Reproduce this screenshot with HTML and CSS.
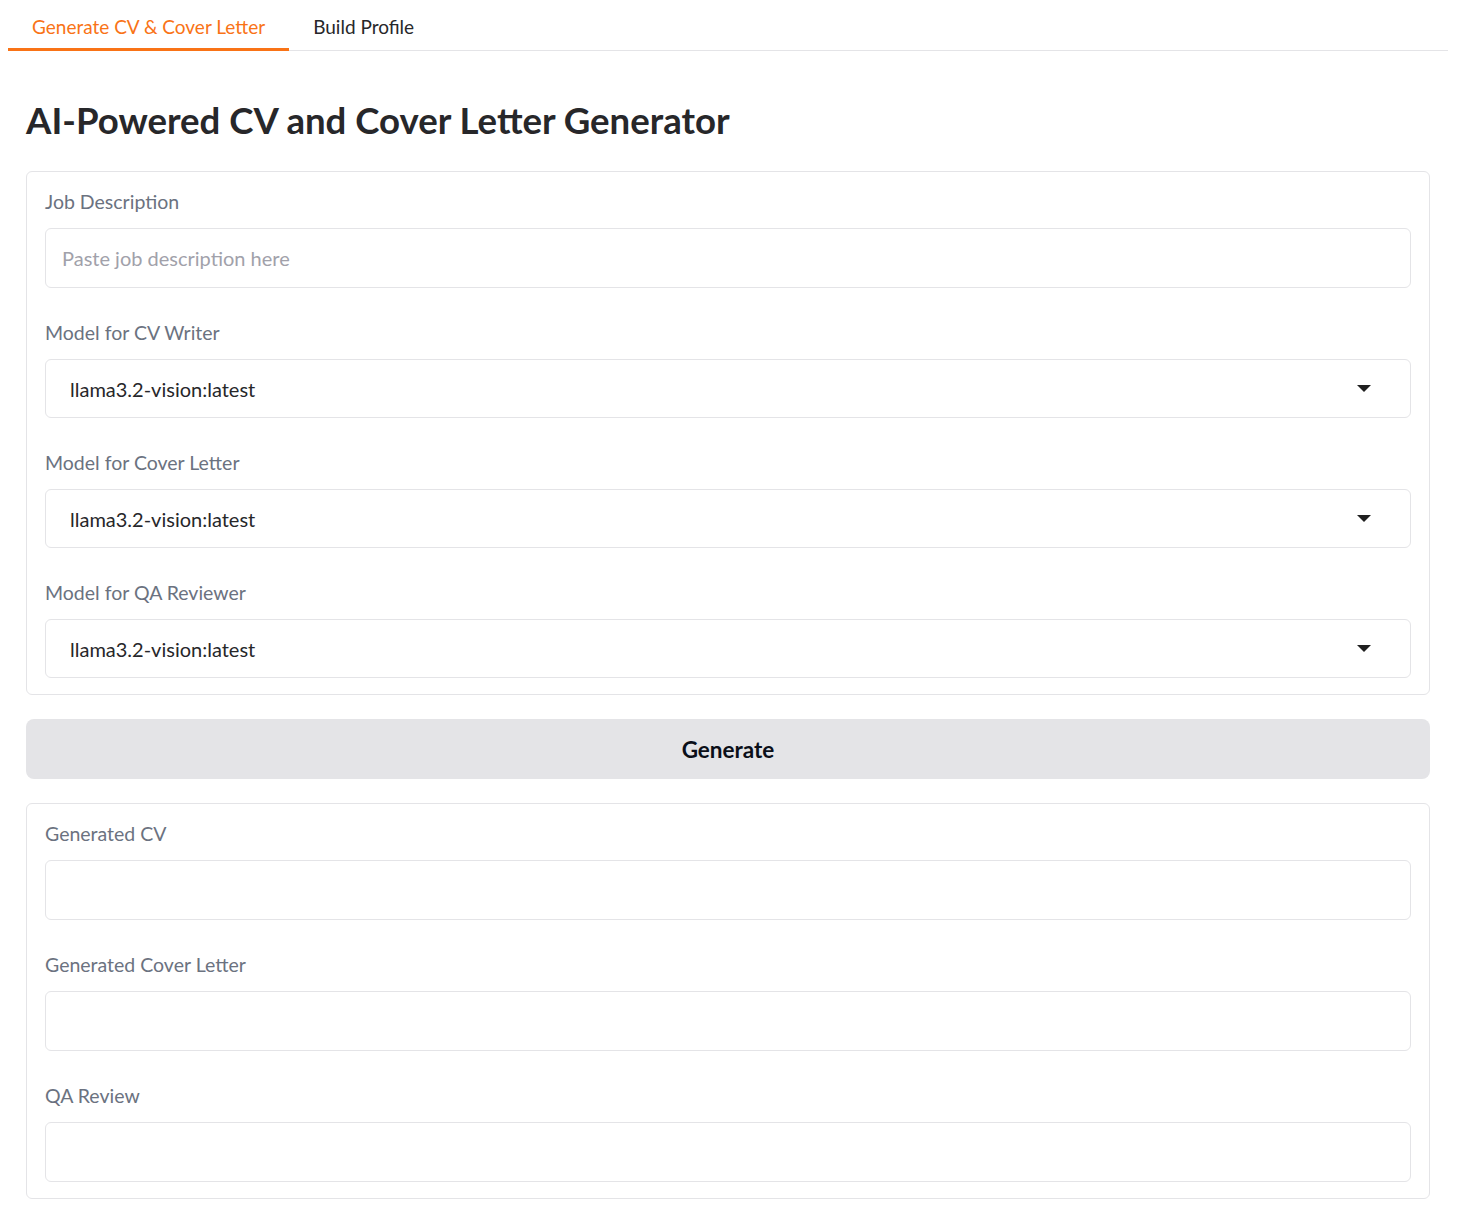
FILE: index.html
```html
<!DOCTYPE html>
<html lang="en">
<head>
<meta charset="utf-8">
<title>AI-Powered CV and Cover Letter Generator</title>
<link rel="stylesheet" href="styles.css">
</head>
<body>
<div class="tabs">
  <button class="tab active">Generate CV &amp; Cover Letter</button>
  <button class="tab">Build Profile</button>
  <div class="tab-rest"></div>
</div>
<main class="content">
  <h1 class="title">AI-Powered CV and Cover Letter Generator</h1>

  <section class="block">
    <div class="field">
      <label class="label">Job Description</label>
      <div class="input textbox placeholder">Paste job description here</div>
    </div>
    <div class="field">
      <label class="label">Model for CV Writer</label>
      <div class="input dropdown"><span>llama3.2-vision:latest</span><span class="caret"></span></div>
    </div>
    <div class="field">
      <label class="label">Model for Cover Letter</label>
      <div class="input dropdown"><span>llama3.2-vision:latest</span><span class="caret"></span></div>
    </div>
    <div class="field">
      <label class="label">Model for QA Reviewer</label>
      <div class="input dropdown"><span>llama3.2-vision:latest</span><span class="caret"></span></div>
    </div>
  </section>

  <button class="generate">Generate</button>

  <section class="block">
    <div class="field">
      <label class="label">Generated CV</label>
      <div class="input textbox"></div>
    </div>
    <div class="field">
      <label class="label">Generated Cover Letter</label>
      <div class="input textbox"></div>
    </div>
    <div class="field">
      <label class="label">QA Review</label>
      <div class="input textbox"></div>
    </div>
  </section>
</main>
</body>
</html>
```
FILE: styles.css
```css
* { box-sizing: border-box; }
html, body { background: #ffffff; }
body {
  margin: 0;
  padding: 0 9px 0 8px;
  font-family: Lato, "Liberation Sans", sans-serif;
  color: #27272a;
}
.tabs {
  display: flex;
  align-items: stretch;
  height: 51px;
}
.tab {
  font-family: inherit;
  font-size: 19px;
  background: none;
  border: none;
  border-bottom: 1px solid #e4e4e7;
  padding: 2px 24px 0 24px;
  margin: 0;
  color: #27272a;
  cursor: pointer;
  line-height: 1;
}
.tab.active {
  color: #f97316;
  border-bottom: 3px solid #f97316;
  padding-top: 4px;
}
.tab-rest {
  flex: 1;
  border-bottom: 1px solid #e4e4e7;
}
.content {
  padding: 0 18px 0 18px;
  display: flex;
  flex-direction: column;
  gap: 24px;
}
.title {
  margin: 46px 0 4px 0;
  font-size: 36.6px;
  line-height: 46px;
  font-weight: 700;
  color: #27272a;
}
.block {
  border: 1px solid #e4e4e7;
  border-radius: 6px;
  padding: 17px 18px 16px 18px;
  display: flex;
  flex-direction: column;
  gap: 32px;
}
.field {
  display: flex;
  flex-direction: column;
}
.label {
  font-size: 19.5px;
  line-height: 26px;
  color: #6b7280;
  margin-bottom: 13px;
}
.input {
  border: 1px solid #e4e4e7;
  border-radius: 6px;
  height: 60px;
  display: flex;
  align-items: center;
  font-size: 20px;
}
.textbox { padding: 0 16px; }
.placeholder { color: #a1a1aa; }
.dropdown {
  height: 59px;
  padding: 0 39px 0 24px;
  justify-content: space-between;
  color: #27272a;
}
.caret {
  width: 0;
  height: 0;
  border-left: 7px solid transparent;
  border-right: 7px solid transparent;
  border-top: 7px solid #1f1f1f;
}
.generate {
  font-family: inherit;
  height: 60px;
  border: none;
  border-radius: 8px;
  background: #e4e4e7;
  color: #0b0f19;
  font-size: 22.5px;
  font-weight: 700;
  cursor: pointer;
}
```
